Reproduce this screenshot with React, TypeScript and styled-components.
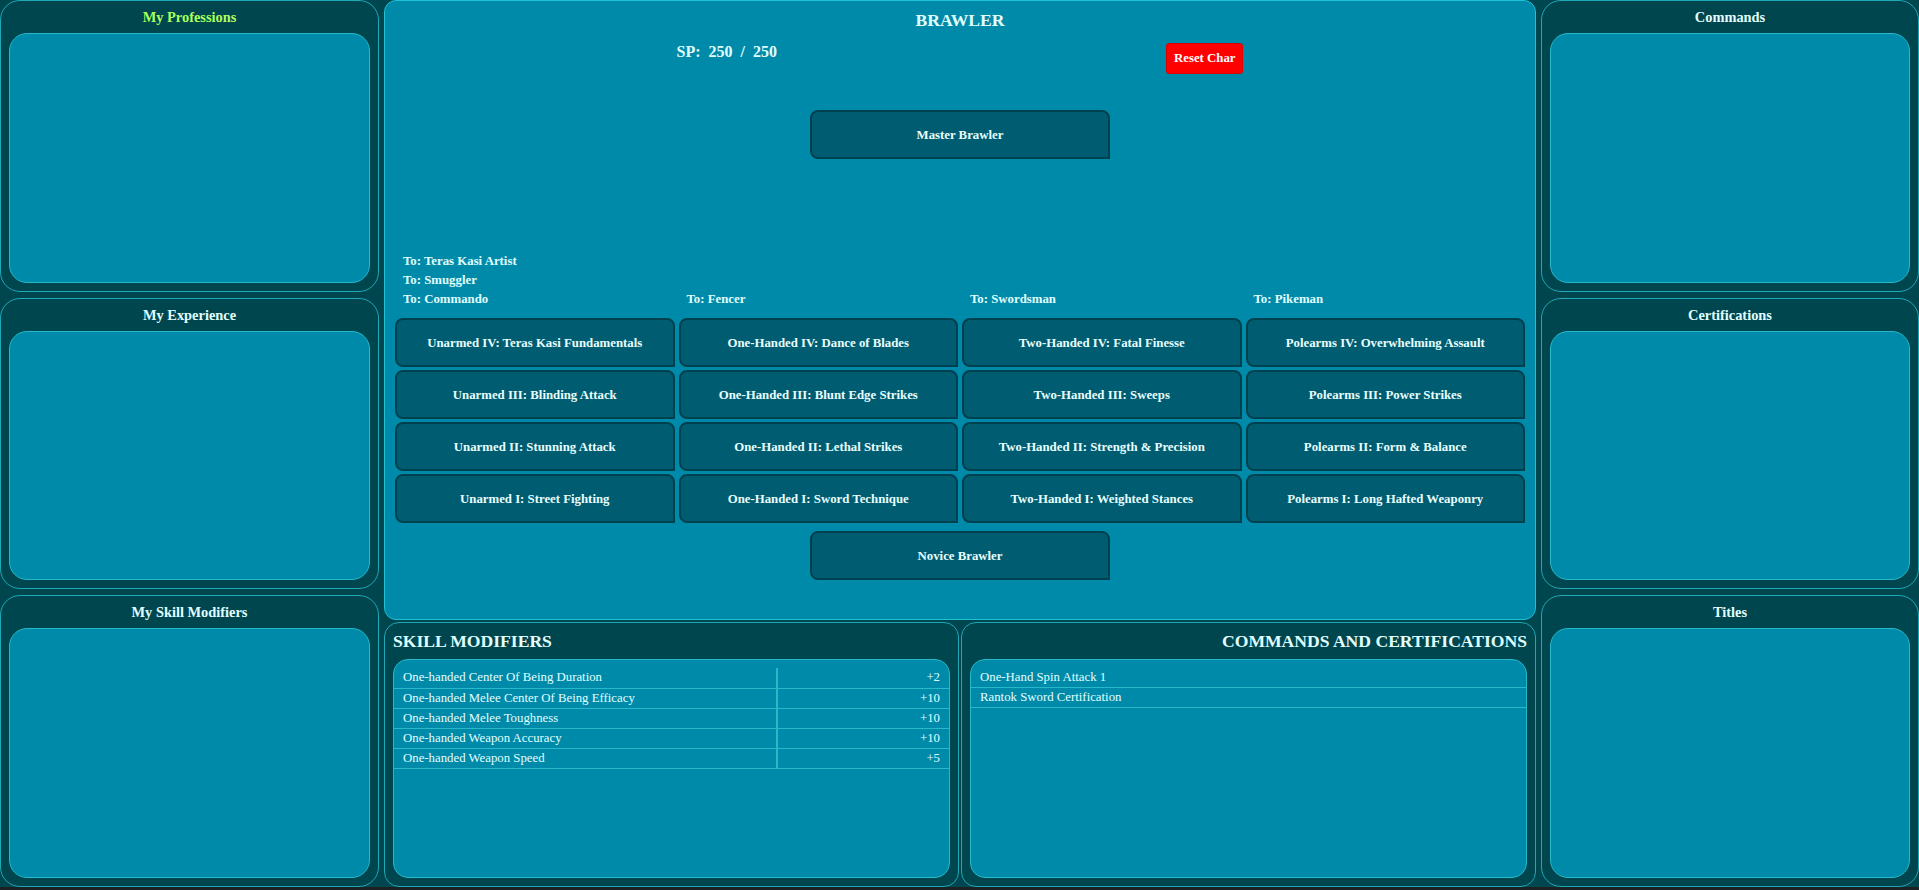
import React from 'react';
import styled, { createGlobalStyle } from 'styled-components';

const GlobalStyle = createGlobalStyle`
  html, body {
    margin: 0;
    padding: 0;
    background: #1c2124;
  }
  body {
    font-family: "Liberation Serif", "Times New Roman", serif;
    color: #e0ffff;
  }
  * { box-sizing: border-box; }
`;

const Layout = styled.div`
  display: flex;
  gap: 5px;
  height: 887px;
  background: #00464f;
`;

const SideColumn = styled.div<{ $w: number }>`
  width: ${p => p.$w}px;
  flex: none;
  display: flex;
  flex-direction: column;
  gap: 6px;
`;

const SidePanel = styled.section`
  flex: 1;
  min-height: 0;
  display: flex;
  flex-direction: column;
  border: 1px solid #1ea7b5;
  border-radius: 20px;
  padding: 0 8px 8px;
`;

const SideTitle = styled.h3<{ $accent?: boolean }>`
  margin: 0;
  height: 32px;
  line-height: 32px;
  text-align: center;
  font-size: 14.4px;
  font-weight: bold;
  color: ${p => (p.$accent ? '#adff5c' : '#e0ffff')};
`;

const InnerBox = styled.div<{ $radius?: number }>`
  flex: 1;
  min-height: 0;
  background: #008aaa;
  border: 1px solid #25b9c9;
  border-radius: ${p => p.$radius ?? 18}px;
`;

const Center = styled.div`
  flex: 1;
  min-width: 0;
  display: flex;
  flex-direction: column;
  gap: 2px;
`;

const MainPanel = styled.section`
  height: 620px;
  flex: none;
  background: #008aaa;
  border: 1px solid #1ec0d4;
  border-radius: 12px;
  padding: 0 10px;
  display: flex;
  flex-direction: column;
  align-items: center;
`;

const ProfTitle = styled.h2`
  margin: 0;
  height: 38px;
  line-height: 38px;
  font-size: 17.6px;
  font-weight: bold;
  text-align: center;
`;

const HeaderRow = styled.div`
  width: 956px;
  display: flex;
  justify-content: space-around;
  align-items: flex-start;
`;

const SpText = styled.div`
  margin-top: 4px;
  font-size: 16px;
  font-weight: bold;
  white-space: pre;
`;

const ResetButton = styled.button`
  margin-top: 4px;
  height: 31px;
  padding: 0 7px;
  background: #ff0000;
  border: 1px solid #d80000;
  border-radius: 3px;
  color: #ffffff;
  font-family: "Liberation Serif", "Times New Roman", serif;
  font-size: 12.8px;
  font-weight: bold;
  cursor: pointer;
`;

const SkillBox = styled.div<{ $w?: number }>`
  width: ${p => (p.$w ? `${p.$w}px` : 'auto')};
  height: 49px;
  padding-top: 2px;
  display: flex;
  align-items: center;
  justify-content: center;
  background: #005c70;
  border: 2px solid #00414f;
  border-radius: 8px 8px 0 8px;
  font-size: 12.8px;
  font-weight: bold;
  color: #e8ffff;
  text-align: center;
`;

const MasterBox = styled(SkillBox)`
  margin-top: 36px;
  flex: none;
`;

const NoviceBox = styled(SkillBox)`
  margin-top: 8px;
  flex: none;
`;

const SkillGrid = styled.div`
  width: 100%;
  display: grid;
  grid-template-columns: repeat(4, 1fr);
  grid-template-rows: 156px repeat(4, 49px);
  grid-auto-flow: column;
  column-gap: 4px;
  row-gap: 3px;
`;

const LabelStack = styled.div`
  display: flex;
  flex-direction: column;
  justify-content: flex-end;
  padding: 0 0 6px 8px;
`;

const ToLabel = styled.div`
  height: 19px;
  line-height: 19px;
  font-size: 12.8px;
  font-weight: bold;
`;

const BottomRow = styled.div`
  flex: 1;
  display: flex;
  gap: 2px;
  min-height: 0;
`;

const BottomPanel = styled.section`
  flex: 1;
  min-width: 0;
  display: flex;
  flex-direction: column;
  border: 1px solid #1ea7b5;
  border-radius: 15px;
  padding: 0 8px 8px;
`;

const BottomTitle = styled.h2<{ $align: 'left' | 'right' }>`
  margin: 0;
  height: 36px;
  line-height: 36px;
  font-size: 17.6px;
  font-weight: bold;
  text-align: ${p => p.$align};
`;

const ListBox = styled(InnerBox)`
  padding-top: 8px;
  overflow: hidden;
`;

const Table = styled.table`
  width: 100%;
  border-collapse: collapse;
  font-size: 12.8px;
`;

const Cell = styled.td<{ $value?: boolean }>`
  height: 20px;
  line-height: 19px;
  padding: 0 9px;
  text-align: ${p => (p.$value ? 'right' : 'left')};
  border-bottom: 1px solid #25b9c9;
  ${p => (p.$value ? '' : 'width: 69%; border-right: 2px solid #25b9c9;')}
  white-space: nowrap;
`;

const ListRow = styled.div`
  height: 20px;
  line-height: 19px;
  padding: 0 9px;
  font-size: 12.8px;
  border-bottom: 1px solid #25b9c9;
`;

const columns = [
  {
    to: ['To: Teras Kasi Artist', 'To: Smuggler', 'To: Commando'],
    skills: [
      'Unarmed IV: Teras Kasi Fundamentals',
      'Unarmed III: Blinding Attack',
      'Unarmed II: Stunning Attack',
      'Unarmed I: Street Fighting',
    ],
  },
  {
    to: ['To: Fencer'],
    skills: [
      'One-Handed IV: Dance of Blades',
      'One-Handed III: Blunt Edge Strikes',
      'One-Handed II: Lethal Strikes',
      'One-Handed I: Sword Technique',
    ],
  },
  {
    to: ['To: Swordsman'],
    skills: [
      'Two-Handed IV: Fatal Finesse',
      'Two-Handed III: Sweeps',
      'Two-Handed II: Strength & Precision',
      'Two-Handed I: Weighted Stances',
    ],
  },
  {
    to: ['To: Pikeman'],
    skills: [
      'Polearms IV: Overwhelming Assault',
      'Polearms III: Power Strikes',
      'Polearms II: Form & Balance',
      'Polearms I: Long Hafted Weaponry',
    ],
  },
];

const modifiers: [string, string][] = [
  ['One-handed Center Of Being Duration', '+2'],
  ['One-handed Melee Center Of Being Efficacy', '+10'],
  ['One-handed Melee Toughness', '+10'],
  ['One-handed Weapon Accuracy', '+10'],
  ['One-handed Weapon Speed', '+5'],
];

const commands = ['One-Hand Spin Attack 1', 'Rantok Sword Certification'];

export default function App() {
  return (
    <>
      <GlobalStyle />
      <Layout>
        <SideColumn $w={379}>
          <SidePanel>
            <SideTitle $accent>My Professions</SideTitle>
            <InnerBox />
          </SidePanel>
          <SidePanel>
            <SideTitle>My Experience</SideTitle>
            <InnerBox />
          </SidePanel>
          <SidePanel>
            <SideTitle>My Skill Modifiers</SideTitle>
            <InnerBox />
          </SidePanel>
        </SideColumn>

        <Center>
          <MainPanel>
            <ProfTitle>BRAWLER</ProfTitle>
            <HeaderRow>
              <SpText>{'SP:\u00a0 250\u00a0 /\u00a0 250'}</SpText>
              <ResetButton>Reset Char</ResetButton>
            </HeaderRow>
            <MasterBox $w={300}>Master Brawler</MasterBox>
            <SkillGrid>
              {columns.map((col, ci) => (
                <React.Fragment key={ci}>
                  <LabelStack>
                    {col.to.map(t => (
                      <ToLabel key={t}>{t}</ToLabel>
                    ))}
                  </LabelStack>
                  {col.skills.map(s => (
                    <SkillBox key={s}>{s}</SkillBox>
                  ))}
                </React.Fragment>
              ))}
            </SkillGrid>
            <NoviceBox $w={300}>Novice Brawler</NoviceBox>
          </MainPanel>

          <BottomRow>
            <BottomPanel>
              <BottomTitle $align="left">SKILL MODIFIERS</BottomTitle>
              <ListBox $radius={15}>
                <Table>
                  <tbody>
                    {modifiers.map(([name, val]) => (
                      <tr key={name}>
                        <Cell>{name}</Cell>
                        <Cell $value>{val}</Cell>
                      </tr>
                    ))}
                  </tbody>
                </Table>
              </ListBox>
            </BottomPanel>
            <BottomPanel>
              <BottomTitle $align="right">COMMANDS AND CERTIFICATIONS</BottomTitle>
              <ListBox $radius={15}>
                {commands.map(c => (
                  <ListRow key={c}>{c}</ListRow>
                ))}
              </ListBox>
            </BottomPanel>
          </BottomRow>
        </Center>

        <SideColumn $w={378}>
          <SidePanel>
            <SideTitle>Commands</SideTitle>
            <InnerBox />
          </SidePanel>
          <SidePanel>
            <SideTitle>Certifications</SideTitle>
            <InnerBox />
          </SidePanel>
          <SidePanel>
            <SideTitle>Titles</SideTitle>
            <InnerBox />
          </SidePanel>
        </SideColumn>
      </Layout>
    </>
  );
}
